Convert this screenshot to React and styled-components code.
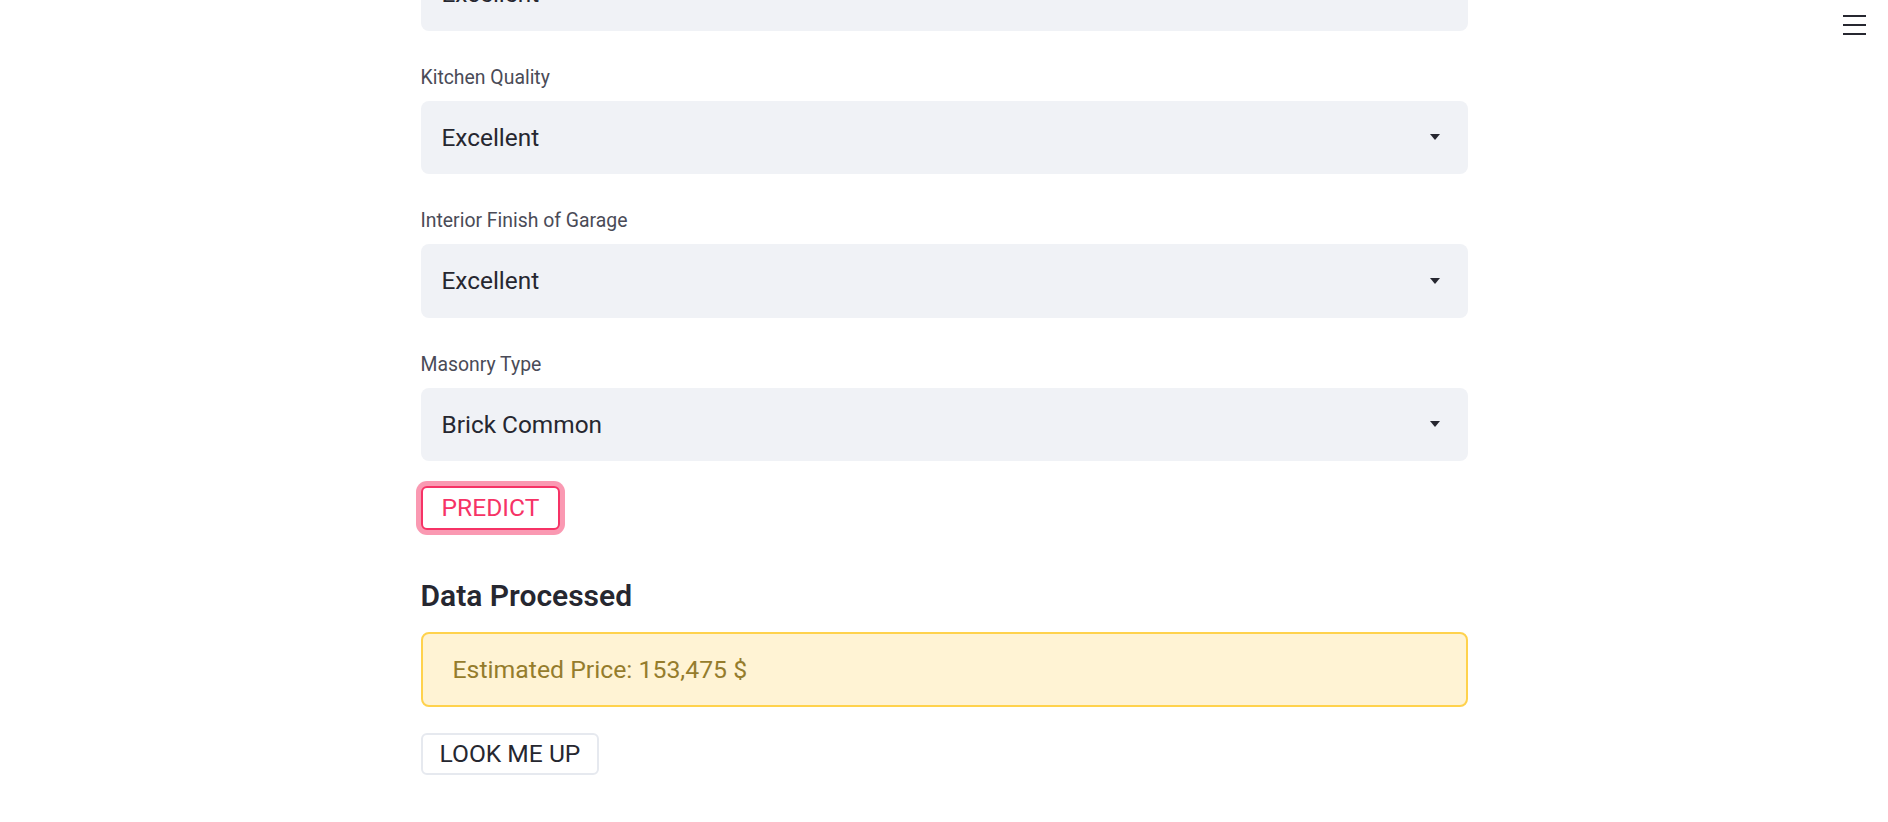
import React from 'react';
import styled, { createGlobalStyle } from 'styled-components';

const GlobalStyle = createGlobalStyle`
  body {
    margin: 0;
    background: #ffffff;
    font-family: Roboto, "Liberation Sans", sans-serif;
    color: #262730;
  }
`;

const Page = styled.div`
  position: relative;
  height: 822px;
  overflow: hidden;
`;

const MenuButton = styled.button`
  position: absolute;
  top: 15px;
  right: 22px;
  width: 23px;
  height: 20px;
  padding: 0;
  border: none;
  background: transparent;
  display: flex;
  flex-direction: column;
  justify-content: space-between;
  cursor: pointer;

  span {
    display: block;
    height: 2px;
    background: #262730;
  }
`;

const Main = styled.div`
  width: 1047px;
  margin: 0 auto;
  display: flex;
  flex-direction: column;
  align-items: flex-start;
`;

const Fields = styled.div`
  width: 100%;
  margin-top: -43px;
  display: flex;
  flex-direction: column;
  gap: 34px;
`;

const Field = styled.div`
  display: flex;
  flex-direction: column;
`;

const Label = styled.label`
  font-size: 19.4px;
  line-height: 25px;
  margin-bottom: 11px;
  color: #4a4b57;
`;

const Select = styled.div`
  height: 73.5px;
  box-sizing: border-box;
  padding: 0 28px 0 21px;
  background: #f0f2f6;
  border-radius: 8px;
  display: flex;
  align-items: center;
  justify-content: space-between;
  font-size: 24.4px;
  color: #262730;
`;

const Button = styled.button`
  box-sizing: border-box;
  height: ${(p) => (p.$focused ? '44px' : '42px')};
  padding: 0 19px;
  border-radius: 6px;
  background: #ffffff;
  font-family: inherit;
  font-size: 24.6px;
  cursor: pointer;
  border: 2px solid ${(p) => (p.$focused ? '#f63366' : '#e6e9ef')};
  color: ${(p) => (p.$focused ? '#f63366' : '#262730')};
  box-shadow: ${(p) => (p.$focused ? '0 0 0 5px rgba(246, 51, 102, 0.5)' : 'none')};
`;

const PredictButton = styled(Button)`
  margin-top: 24.5px;
`;

const Heading = styled.h3`
  margin: 48px 0 18px;
  font-size: 30px;
  line-height: 36px;
  font-weight: 600;
  color: #262730;
`;

const Alert = styled.div`
  width: 100%;
  height: 75px;
  box-sizing: border-box;
  padding-left: 30px;
  display: flex;
  align-items: center;
  background: #fff3d4;
  border: 2px solid #ffd24d;
  border-radius: 8px;
  color: #957c2c;
  font-size: 24.8px;
`;

const LookupButton = styled(Button)`
  margin-top: 26px;
  padding: 0 17px;
`;

const Caret = () => (
  <svg width="10" height="6" viewBox="0 0 10 6">
    <path d="M0 0 L10 0 L5 6 Z" fill="#262730" />
  </svg>
);

const fields = [
  { label: null, value: 'Excellent' },
  { label: 'Kitchen Quality', value: 'Excellent' },
  { label: 'Interior Finish of Garage', value: 'Excellent' },
  { label: 'Masonry Type', value: 'Brick Common' },
];

export default function App() {
  return (
    <Page>
      <GlobalStyle />
      <MenuButton aria-label="menu">
        <span />
        <span />
        <span />
      </MenuButton>
      <Main>
        <Fields>
          {fields.map((f, i) => (
            <Field key={i}>
              {f.label && <Label>{f.label}</Label>}
              <Select>
                <span>{f.value}</span>
                <Caret />
              </Select>
            </Field>
          ))}
        </Fields>
        <PredictButton $focused>PREDICT</PredictButton>
        <Heading>Data Processed</Heading>
        <Alert>Estimated Price: 153,475 $</Alert>
        <LookupButton>LOOK ME UP</LookupButton>
      </Main>
    </Page>
  );
}
